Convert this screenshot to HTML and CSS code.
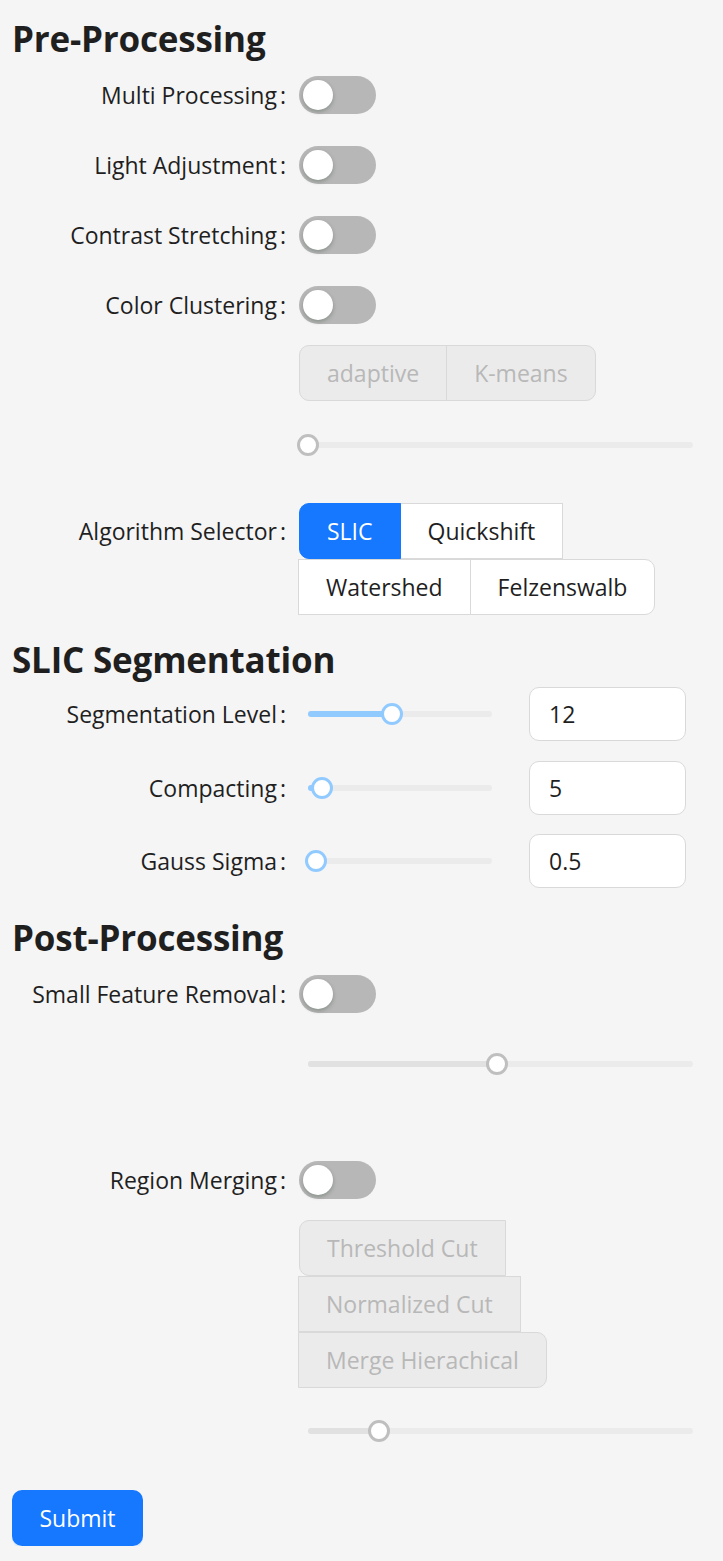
FILE: index.html
```html
<!DOCTYPE html>
<html lang="en">
<head>
<meta charset="utf-8">
<title>Segmentation Settings</title>
<link rel="stylesheet" href="styles.css">
</head>
<body>
<div class="page">
  <h2 class="title sp-15">Pre-Processing</h2>

  <div class="item sp-13">
    <label class="lbl">Multi Processing</label>
    <div class="ctl"><span class="switch"><span class="knob"></span></span></div>
  </div>
  <div class="item sp-32">
    <label class="lbl">Light Adjustment</label>
    <div class="ctl"><span class="switch"><span class="knob"></span></span></div>
  </div>
  <div class="item sp-32">
    <label class="lbl">Contrast Stretching</label>
    <div class="ctl"><span class="switch"><span class="knob"></span></span></div>
  </div>
  <div class="item sp-32">
    <label class="lbl">Color Clustering</label>
    <div class="ctl"><span class="switch"><span class="knob"></span></span></div>
  </div>

  <div class="item offset sp-21">
    <div class="rgroup disabled">
      <span class="rbtn first">adaptive</span>
      <span class="rbtn last">K-means</span>
    </div>
  </div>

  <div class="item offset sp-33">
    <div class="slider wide disabled">
      <span class="rail"></span>
      <span class="track" style="width:0%"></span>
      <span class="handle" style="left:0%"></span>
    </div>
  </div>

  <div class="item top sp-47">
    <label class="lbl lbl-top">Algorithm Selector</label>
    <div class="ctl">
      <div class="rgroup algo">
        <span class="rbtn first on">SLIC</span>
        <span class="rbtn">Quickshift</span>
        <span class="rbtn">Watershed</span>
        <span class="rbtn last">Felzenswalb</span>
      </div>
    </div>
  </div>

  <h2 class="title sp-21">SLIC Segmentation</h2>

  <div class="item sp-3">
    <label class="lbl">Segmentation Level</label>
    <div class="ctl">
      <div class="slider short">
        <span class="rail"></span>
        <span class="track" style="width:45.6%"></span>
        <span class="handle" style="left:45.6%"></span>
      </div>
      <div class="num">12</div>
    </div>
  </div>
  <div class="item sp-20">
    <label class="lbl">Compacting</label>
    <div class="ctl">
      <div class="slider short">
        <span class="rail"></span>
        <span class="track" style="width:7.6%"></span>
        <span class="handle" style="left:7.6%"></span>
      </div>
      <div class="num">5</div>
    </div>
  </div>
  <div class="item sp-19">
    <label class="lbl">Gauss Sigma</label>
    <div class="ctl">
      <div class="slider short">
        <span class="rail"></span>
        <span class="track" style="width:4.4%"></span>
        <span class="handle" style="left:4.4%"></span>
      </div>
      <div class="num">0.5</div>
    </div>
  </div>

  <h2 class="title sp-26">Post-Processing</h2>

  <div class="item sp-13">
    <label class="lbl">Small Feature Removal</label>
    <div class="ctl"><span class="switch"><span class="knob"></span></span></div>
  </div>

  <div class="item offset sp-40">
    <div class="slider wide disabled">
      <span class="rail"></span>
      <span class="track" style="width:49%"></span>
      <span class="handle" style="left:49%"></span>
    </div>
  </div>

  <div class="item sp-86">
    <label class="lbl">Region Merging</label>
    <div class="ctl"><span class="switch"><span class="knob"></span></span></div>
  </div>

  <div class="item offset sp-21">
    <div class="rgroup disabled stack">
      <span class="rbtn first">Threshold Cut</span>
      <span class="rbtn">Normalized Cut</span>
      <span class="rbtn last">Merge Hierachical</span>
    </div>
  </div>

  <div class="item offset sp-32">
    <div class="slider wide disabled">
      <span class="rail"></span>
      <span class="track" style="width:18.4%"></span>
      <span class="handle" style="left:18.4%"></span>
    </div>
  </div>

  <button class="submit sp-48" type="button">Submit</button>
</div>
</body>
</html>
```

FILE: styles.css
```css
* { box-sizing: border-box; }

body {
  margin: 0;
  background: #f5f5f5;
  font-family: "Open Sans", "Noto Sans", sans-serif;
  color: rgba(0, 0, 0, 0.88);
}

.page {
  padding: 0 12px;
  display: flex;
  flex-direction: column;
  align-items: flex-start;
}

.title {
  margin: 0;
  height: 48px;
  line-height: 48px;
  font-size: 35px;
  font-weight: 700;
  color: #1f1f1f;
  letter-spacing: -0.2px;
}

.item {
  display: flex;
  align-items: center;
}
.item.top { align-items: flex-start; }

.offset { padding-left: 287px; }

.lbl {
  flex: none;
  width: 274px;
  text-align: right;
  font-size: 23px;
  white-space: nowrap;
  color: #1f1f1f;
}
.lbl::after {
  content: ":";
  margin-left: 3px;
}
.lbl-top {
  line-height: 56px;
}

.ctl {
  margin-left: 13px;
  display: flex;
  align-items: center;
}

/* switch */
.switch {
  display: block;
  width: 77px;
  height: 38px;
  border-radius: 19px;
  background: #b7b7b7;
  padding: 4px;
}
.knob {
  display: block;
  width: 30px;
  height: 30px;
  border-radius: 50%;
  background: #fff;
  box-shadow: 0 2px 4px rgba(0, 35, 11, 0.25);
}

/* radio button groups */
.rgroup {
  display: flex;
  flex-wrap: wrap;
}
.rgroup.algo { width: 370px; }
.rgroup.stack { width: 270px; }

.rbtn {
  display: flex;
  align-items: center;
  height: 56px;
  padding: 0 27px;
  border: 1px solid #d9d9d9;
  background: #fff;
  font-size: 23px;
  color: #1f1f1f;
  white-space: nowrap;
}
.rbtn + .rbtn { margin-left: -1px; }
.rbtn.first { border-radius: 10px 0 0 10px; }
.rbtn.last { border-radius: 0 10px 10px 0; }
.rbtn.on {
  background: #1677ff;
  border-color: #1677ff;
  color: #fff;
  position: relative;
}

.rgroup.disabled .rbtn {
  background: #ebebeb;
  color: #b8b8b8;
  border-color: #d9d9d9;
}

/* sliders */
.slider {
  position: relative;
  height: 22px;
  margin-left: 9px;
}
.slider.wide { width: 385px; }
.slider.short { width: 184px; }

.rail {
  position: absolute;
  left: 0;
  right: 0;
  top: 8px;
  height: 6px;
  border-radius: 3px;
  background: #ebebeb;
}
.track {
  position: absolute;
  left: 0;
  top: 8px;
  height: 6px;
  border-radius: 3px;
  background: #91caff;
}
.handle {
  position: absolute;
  top: 0;
  width: 22px;
  height: 22px;
  margin-left: -11px;
  border-radius: 50%;
  background: #fff;
  border: 3px solid #91caff;
}
.slider.disabled .track { background: #e1e1e1; }
.slider.disabled .handle { border-color: #bfbfbf; }

/* number input */
.num {
  margin-left: 37px;
  width: 157px;
  height: 54px;
  display: flex;
  align-items: center;
  padding: 0 19px;
  border: 1px solid #d9d9d9;
  border-radius: 10px;
  background: #fff;
  font-size: 23px;
  color: #1f1f1f;
}

/* submit */
.submit {
  width: 131px;
  height: 56px;
  border: none;
  border-radius: 10px;
  background: #1677ff;
  color: #fff;
  font-family: inherit;
  font-size: 23px;
  box-shadow: 0 2px 0 rgba(5, 145, 255, 0.1);
  padding: 0;
}

/* vertical rhythm */
.sp-3 { margin-top: 3px; }
.sp-13 { margin-top: 13px; }
.sp-15 { margin-top: 15px; }
.sp-19 { margin-top: 19px; }
.sp-20 { margin-top: 20px; }
.sp-21 { margin-top: 21px; }
.sp-26 { margin-top: 26px; }
.sp-32 { margin-top: 32px; }
.sp-33 { margin-top: 33px; }
.sp-40 { margin-top: 40px; }
.sp-47 { margin-top: 47px; }
.sp-48 { margin-top: 48px; }
.sp-86 { margin-top: 86px; }
```
